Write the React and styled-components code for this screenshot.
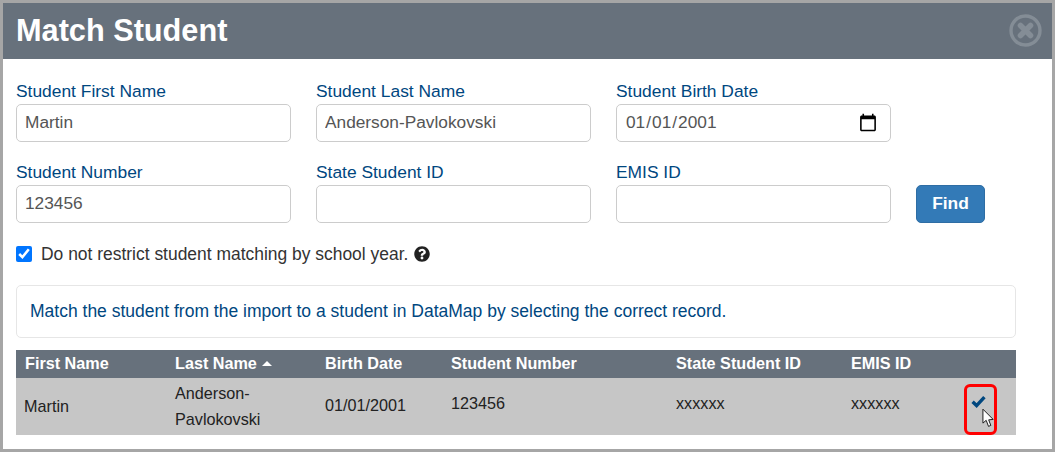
import React from "react";
import styled, { createGlobalStyle } from "styled-components";
import { FaQuestionCircle } from "react-icons/fa";

const GlobalStyle = createGlobalStyle`
  * {
    box-sizing: border-box;
  }

  html,
  body {
    margin: 0;
    padding: 0;
    background: #fff;
  }

  body {
    font-family: "Liberation Sans", Arial, sans-serif;
    font-size: 17.4px;
  }
`;

const Modal = styled.div`
  position: relative;
  width: 1055px;
  height: 452px;
  border: 3px solid #a6a6a6;
  background: #fff;
  overflow: hidden;
`;

const Header = styled.header`
  display: flex;
  align-items: center;
  justify-content: space-between;
  height: 56px;
  padding: 0 10px 0 13px;
  background: #67717c;
`;

const Title = styled.h1`
  margin: 0;
  color: #fff;
  font-size: 30.7px;
  font-weight: 700;
  line-height: 56px;
`;

const CloseIcon = styled.svg`
  display: block;
  width: 33px;
  height: 33px;
  margin-top: -1px;
`;

const Body = styled.div`
  padding: 22px 36px 0 13px;
`;

const FormRow = styled.div`
  display: flex;
  align-items: flex-end;
  gap: 25px;
  margin-bottom: 20px;
`;

const Field = styled.label`
  display: block;
  width: 275px;
`;

const LabelText = styled.span`
  display: block;
  height: 23px;
  color: #00477f;
  font-size: 17.4px;
  line-height: 20px;
`;

const Input = styled.input`
  display: block;
  width: 100%;
  height: 38px;
  padding: 0 8px 1px;
  border: 1px solid #ccc;
  border-radius: 5px;
  background: #fff;
  color: #555;
  font-family: inherit;
  font-size: 17.3px;
  outline: none;

  &::-webkit-calendar-picker-indicator {
    width: 20px;
    height: 20px;
    margin: 0 4px 0 0;
    padding: 0;
  }
`;

const FindButton = styled.button`
  width: 69px;
  height: 38px;
  padding: 0 0 1px;
  border: 1px solid #2e6da4;
  border-radius: 5px;
  background: #337ab7;
  color: #fff;
  font-family: inherit;
  font-size: 17.4px;
  font-weight: 700;
`;

const CheckRow = styled.div`
  display: flex;
  align-items: center;
  height: 18px;
  margin-top: 22px;
  color: #333;
  font-size: 17.45px;
`;

const Checkbox = styled.input`
  width: 16px;
  height: 16px;
  margin: 0 9px 0 0;
`;

const HelpIcon = styled(FaQuestionCircle)`
  width: 16px;
  height: 16px;
  margin-left: 6px;
  color: #222;
`;

const Notice = styled.div`
  width: 1000px;
  height: 53px;
  margin-top: 22px;
  padding: 0 13px;
  border: 1px solid #e6e6e6;
  border-radius: 5px;
  color: #00477f;
  font-size: 17.5px;
  line-height: 50px;
`;

const Table = styled.table`
  width: 1000px;
  margin-top: 12px;
  border-collapse: collapse;
  table-layout: fixed;
`;

const HeadCell = styled.th`
  width: ${props => props.$width}px;
  height: 28px;
  padding: 0 0 2px 9px;
  background: #67717c;
  color: #fff;
  font-size: 16.2px;
  font-weight: 700;
  text-align: left;
`;

const SortCaret = styled.span`
  display: inline-block;
  margin-left: 5px;
  border-right: 5px solid transparent;
  border-bottom: 5px solid #fff;
  border-left: 5px solid transparent;
  vertical-align: 3px;
`;

const Cell = styled.td`
  height: 57px;
  padding: 0 0 ${props => props.$lift || 0}px ${props => props.$inset || 9}px;
  background: #c6c6c6;
  color: #222;
  font-size: 16.2px;
  line-height: 26px;
  vertical-align: middle;
`;

const ActionCell = styled(Cell)`
  padding: 0 0 10px 0;
`;

const CheckIcon = styled.svg`
  display: block;
  width: 15px;
  height: 13px;
  margin-left: 29px;
`;

const Highlight = styled.div`
  position: absolute;
  left: 961px;
  top: 381px;
  width: 33px;
  height: 51px;
  border: 3px solid #f00;
  border-radius: 6px;
  pointer-events: none;
`;

const Cursor = styled.svg`
  position: absolute;
  left: 979px;
  top: 405px;
  width: 13px;
  height: 20px;
  pointer-events: none;
`;

const columns = [
  { label: "First Name", width: 150 },
  { label: "Last Name", width: 150, sorted: true },
  { label: "Birth Date", width: 126 },
  { label: "Student Number", width: 225 },
  { label: "State Student ID", width: 175 },
  { label: "EMIS ID", width: 100 },
  { label: "", width: 74 },
];

const App = () => {
  return (
    <Modal>
      <GlobalStyle />
      <Header>
        <Title>Match Student</Title>
        <CloseIcon viewBox="0 0 33 33">
          <circle cx="16.5" cy="16.5" r="14.5" fill="none" stroke="#848d96" strokeWidth="3.4" />
          <path d="M11.5 11.5 L21.5 21.5 M21.5 11.5 L11.5 21.5" stroke="#848d96" strokeWidth="5.6" strokeLinecap="round" />
        </CloseIcon>
      </Header>
      <Body>
        <FormRow>
          <Field>
            <LabelText>Student First Name</LabelText>
            <Input type="text" defaultValue="Martin" />
          </Field>
          <Field>
            <LabelText>Student Last Name</LabelText>
            <Input type="text" defaultValue="Anderson-Pavlokovski" />
          </Field>
          <Field>
            <LabelText>Student Birth Date</LabelText>
            <Input type="date" defaultValue="2001-01-01" />
          </Field>
        </FormRow>
        <FormRow>
          <Field>
            <LabelText>Student Number</LabelText>
            <Input type="text" defaultValue="123456" />
          </Field>
          <Field>
            <LabelText>State Student ID</LabelText>
            <Input type="text" />
          </Field>
          <Field>
            <LabelText>EMIS ID</LabelText>
            <Input type="text" />
          </Field>
          <FindButton type="button">Find</FindButton>
        </FormRow>
        <CheckRow>
          <Checkbox type="checkbox" defaultChecked />
          Do not restrict student matching by school year.
          <HelpIcon />
        </CheckRow>
        <Notice>
          Match the student from the import to a student in DataMap by selecting the correct record.
        </Notice>
        <Table>
          <thead>
            <tr>
              {columns.map(col => (
                <HeadCell key={col.label} $width={col.width}>
                  {col.label}
                  {col.sorted && <SortCaret />}
                </HeadCell>
              ))}
            </tr>
          </thead>
          <tbody>
            <tr>
              <Cell $inset={8} $lift={2}>Martin</Cell>
              <Cell $lift={2}>Anderson-Pavlokovski</Cell>
              <Cell $lift={4}>01/01/2001</Cell>
              <Cell $lift={8}>123456</Cell>
              <Cell $lift={8}>xxxxxx</Cell>
              <Cell $lift={8}>xxxxxx</Cell>
              <ActionCell>
                <CheckIcon viewBox="0 0 15 13">
                  <path d="M1.6 6.8 L5.6 10.6 L13.4 2.2" fill="none" stroke="#00477f" strokeWidth="3.4" />
                </CheckIcon>
              </ActionCell>
            </tr>
          </tbody>
        </Table>
      </Body>
      <Highlight />
      <Cursor viewBox="0 0 14 21">
        <path d="M1 1 L1 16 L4.5 13 L7 19.5 L9.5 18.5 L7.2 12.5 L12 12 Z" fill="#fff" stroke="#111" strokeWidth="1" />
      </Cursor>
    </Modal>
  );
};

export default App;
